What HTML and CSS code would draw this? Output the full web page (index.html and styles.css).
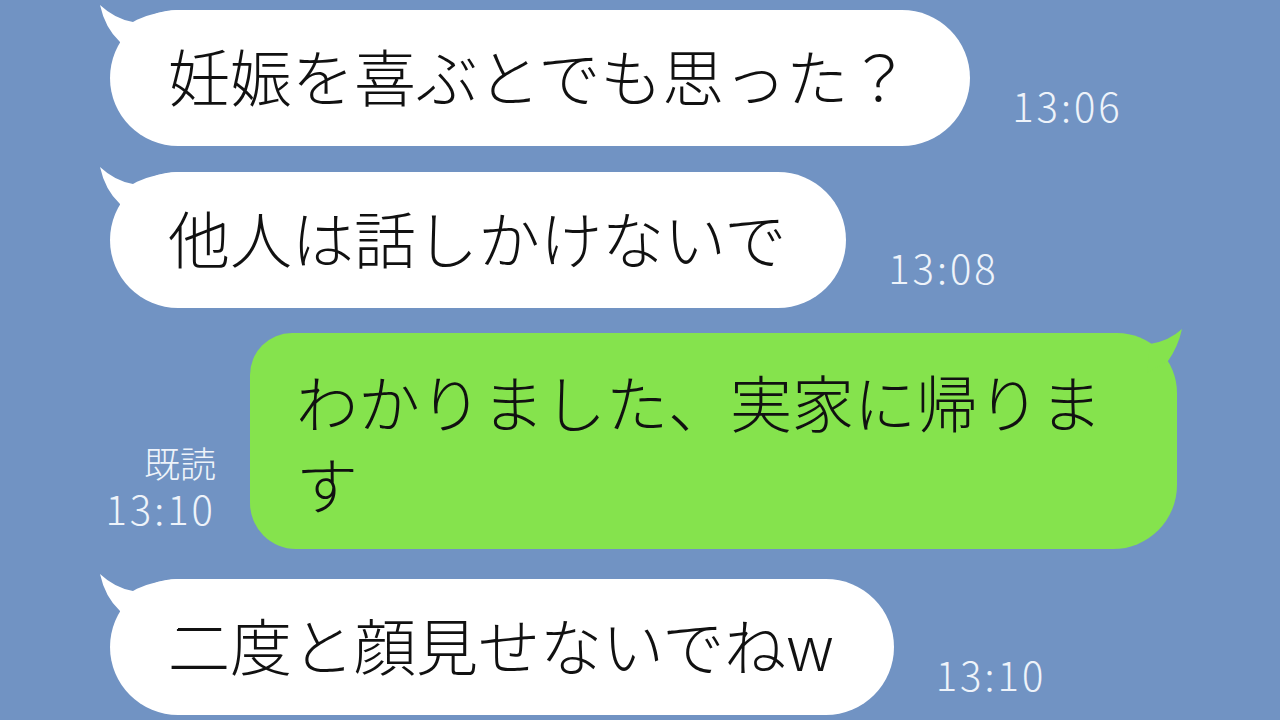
FILE: index.html
```html
<!DOCTYPE html>
<html lang="ja">
<head>
<meta charset="utf-8">
<meta name="viewport" content="width=device-width, initial-scale=1.0">
<link rel="stylesheet" href="styles.css">
<title>トーク</title>
</head>
<body>
<div class="chat">

  <div class="row row_left">
    <div class="bubble bubble_white">
      <svg class="tail tail_left" viewBox="-15 -10 90 60"><path d="M10 32 Q-5 18 -10 -5 Q5 9 23 12 Q38 3 68 0 L68 50 L10 50 Z"/></svg>
      妊娠を喜ぶとでも思った？
    </div>
    <span class="time">13:06</span>
  </div>

  <div class="row row_left">
    <div class="bubble bubble_white">
      <svg class="tail tail_left" viewBox="-15 -10 90 60"><path d="M10 32 Q-5 18 -10 -5 Q5 9 23 12 Q38 3 68 0 L68 50 L10 50 Z"/></svg>
      他人は話しかけないで
    </div>
    <span class="time">13:08</span>
  </div>

  <div class="row row_right">
    <div class="meta">
      <span class="read">既読</span>
      <span class="time">13:10</span>
    </div>
    <div class="bubble bubble_green">
      <svg class="tail tail_right" viewBox="-80 -10 90 60"><path d="M-9 28 Q1 14 5 -4 Q-8 8 -27 11 L-30 40 Z"/></svg>
      わかりました、実家に帰ります
    </div>
  </div>

  <div class="row row_left row_last">
    <div class="bubble bubble_white">
      <svg class="tail tail_left" viewBox="-15 -10 90 60"><path d="M10 32 Q-5 18 -10 -5 Q5 9 23 12 Q38 3 68 0 L68 50 L10 50 Z"/></svg>
      二度と顔見せないでねw
    </div>
    <span class="time">13:10</span>
  </div>

</div>
</body>
</html>
```

FILE: styles.css
```css
body {
    margin: 0;
    background-color: #7193c3;
    font-family: "Noto Sans CJK JP", "Noto Sans", sans-serif;
    overflow: hidden;
}

.chat {
    display: flex;
    flex-direction: column;
    gap: 26px;
    padding-top: 10px;
    height: 710px;
}

.row {
    display: flex;
    align-items: flex-end;
}

.row_left {
    padding-left: 110px;
}

.row_right {
    justify-content: flex-end;
    padding-right: 103px;
    margin-top: -1px;
}

.row_last {
    margin-top: 4px;
}

.bubble {
    position: relative;
    font-size: 62px;
    line-height: 80px;
    font-weight: 300;
    color: #111;
    white-space: nowrap;
}

.bubble_white {
    background-color: #fff;
    border-radius: 68px;
    padding: 25px 60px 31px 58px;
}

.bubble_green {
    background-color: #85e34d;
    border-radius: 42px 60px 64px 46px;
    width: 927px;
    box-sizing: border-box;
    padding: 27px 60px 25px 46px;
    line-height: 82px;
    white-space: normal;
}

.tail {
    position: absolute;
    top: -10px;
    width: 90px;
    height: 60px;
}

.tail_left {
    left: -15px;
    fill: #fff;
}

.tail_right {
    right: -10px;
    fill: #85e34d;
}

.time {
    font-size: 40px;
    line-height: 40px;
    font-weight: 300;
    color: #eef3fa;
    letter-spacing: 3px;
}

.row_left .time {
    margin-left: 42px;
    margin-bottom: 21px;
}

.meta {
    display: flex;
    flex-direction: column;
    align-items: flex-end;
    gap: 6px;
    margin-right: 34px;
    margin-bottom: 21px;
}

.read {
    font-size: 36px;
    line-height: 40px;
    font-weight: 300;
    color: #eef3fa;
}
```
